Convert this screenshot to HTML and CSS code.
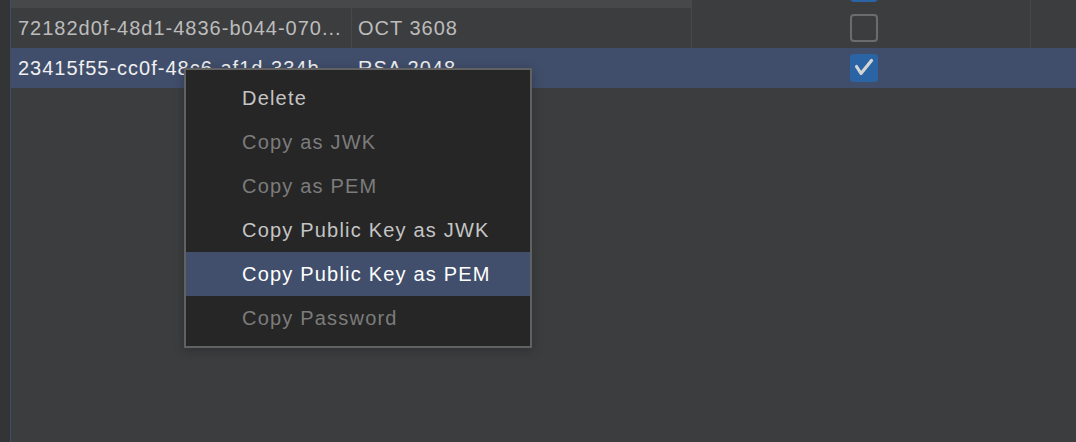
FILE: index.html
```html
<!DOCTYPE html>
<html>
<head>
<meta charset="utf-8">
<link rel="stylesheet" href="styles.css">
</head>
<body>
<div class="app">
  <div class="gutter"></div>
  <div class="table">
    <div class="row row-partial">
      <div class="cell c1"></div>
      <div class="cell c2"></div>
      <div class="cell c3"><span class="cb cb-on"><svg viewBox="0 0 28 28" width="28" height="28"><polyline points="6.5,14.5 11,19.5 21,7.5" fill="none" stroke="#d8d8d8" stroke-width="3.2" stroke-linecap="round" stroke-linejoin="round"/></svg></span></div>
      <div class="cell c4"></div>
    </div>
    <div class="row">
      <div class="cell c1">72182d0f-48d1-4836-b044-070...</div>
      <div class="cell c2">OCT 3608</div>
      <div class="cell c3"><span class="cb cb-off"></span></div>
      <div class="cell c4"></div>
    </div>
    <div class="row row-sel">
      <div class="cell c1">23415f55-cc0f-48c6-af1d-334b...</div>
      <div class="cell c2">RSA 2048</div>
      <div class="cell c3"><span class="cb cb-on"><svg viewBox="0 0 28 28" width="28" height="28"><polyline points="6.5,12.5 11,19.5 21.5,6.5" fill="none" stroke="#d4d4d4" stroke-width="3.2" stroke-linecap="round" stroke-linejoin="round"/></svg></span></div>
      <div class="cell c4"></div>
    </div>
  </div>
  <div class="menu">
    <div class="item">Delete</div>
    <div class="item disabled">Copy as JWK</div>
    <div class="item disabled">Copy as PEM</div>
    <div class="item">Copy Public Key as JWK</div>
    <div class="item active">Copy Public Key as PEM</div>
    <div class="item disabled">Copy Password</div>
  </div>
</div>
</body>
</html>
```

FILE: styles.css
```css
html, body {
  margin: 0;
  padding: 0;
}
body {
  width: 1076px;
  height: 442px;
  overflow: hidden;
  background: #3c3d3f;
  font-family: "Liberation Sans", Arial, sans-serif;
  font-size: 20px;
  letter-spacing: 1px;
}
.app {
  position: relative;
  display: flex;
  height: 442px;
}
.gutter {
  width: 10px;
  flex: none;
  background: #333436;
  border-right: 1px solid #3f4c6a;
}
.table {
  flex: 1;
  display: flex;
  flex-direction: column;
  overflow: hidden;
}
.row {
  display: flex;
  height: 40px;
  flex: none;
  color: #bcbcbc;
}
.row-partial {
  margin-top: -32px;
}
.row-partial .c1,
.row-partial .c2 {
  background: #46484a;
  border-right-color: #46484a;
}
.cell {
  display: flex;
  align-items: center;
  box-sizing: border-box;
  white-space: nowrap;
  overflow: hidden;
}
.c1 {
  width: 341px;
  padding-left: 7px;
  border-right: 1px solid #46484a;
}
.c2 {
  width: 340px;
  padding-left: 6px;
  border-right: 1px solid #46484a;
}
.c3 {
  width: 339px;
  justify-content: center;
  border-right: 1px solid #46484a;
  padding-left: 5px;
}
.c4 {
  flex: 1;
}
.row-sel {
  background: #404e6b;
  color: #f0f0f0;
}
.row-sel .cell {
  border-right-color: transparent;
}
.cb {
  display: block;
  width: 28px;
  height: 28px;
  box-sizing: border-box;
  border-radius: 4px;
}
.cb svg {
  display: block;
}
.cb-off {
  border: 2px solid #6c6c6c;
}
.cb-on {
  background: #2b64a4;
}
.menu {
  position: absolute;
  left: 184px;
  top: 68px;
  width: 348px;
  box-sizing: border-box;
  background: #262626;
  border: 2px solid #616161;
  padding: 6px 0;
  box-shadow: 0 2px 10px rgba(0, 0, 0, 0.25);
  letter-spacing: 1.2px;
}
.item {
  height: 44px;
  display: flex;
  align-items: center;
  padding-left: 56px;
  color: #c4c4c4;
  white-space: nowrap;
}
.item.disabled {
  color: #7c7c7c;
}
.item.active {
  background: #414f6c;
  color: #ffffff;
}
```
